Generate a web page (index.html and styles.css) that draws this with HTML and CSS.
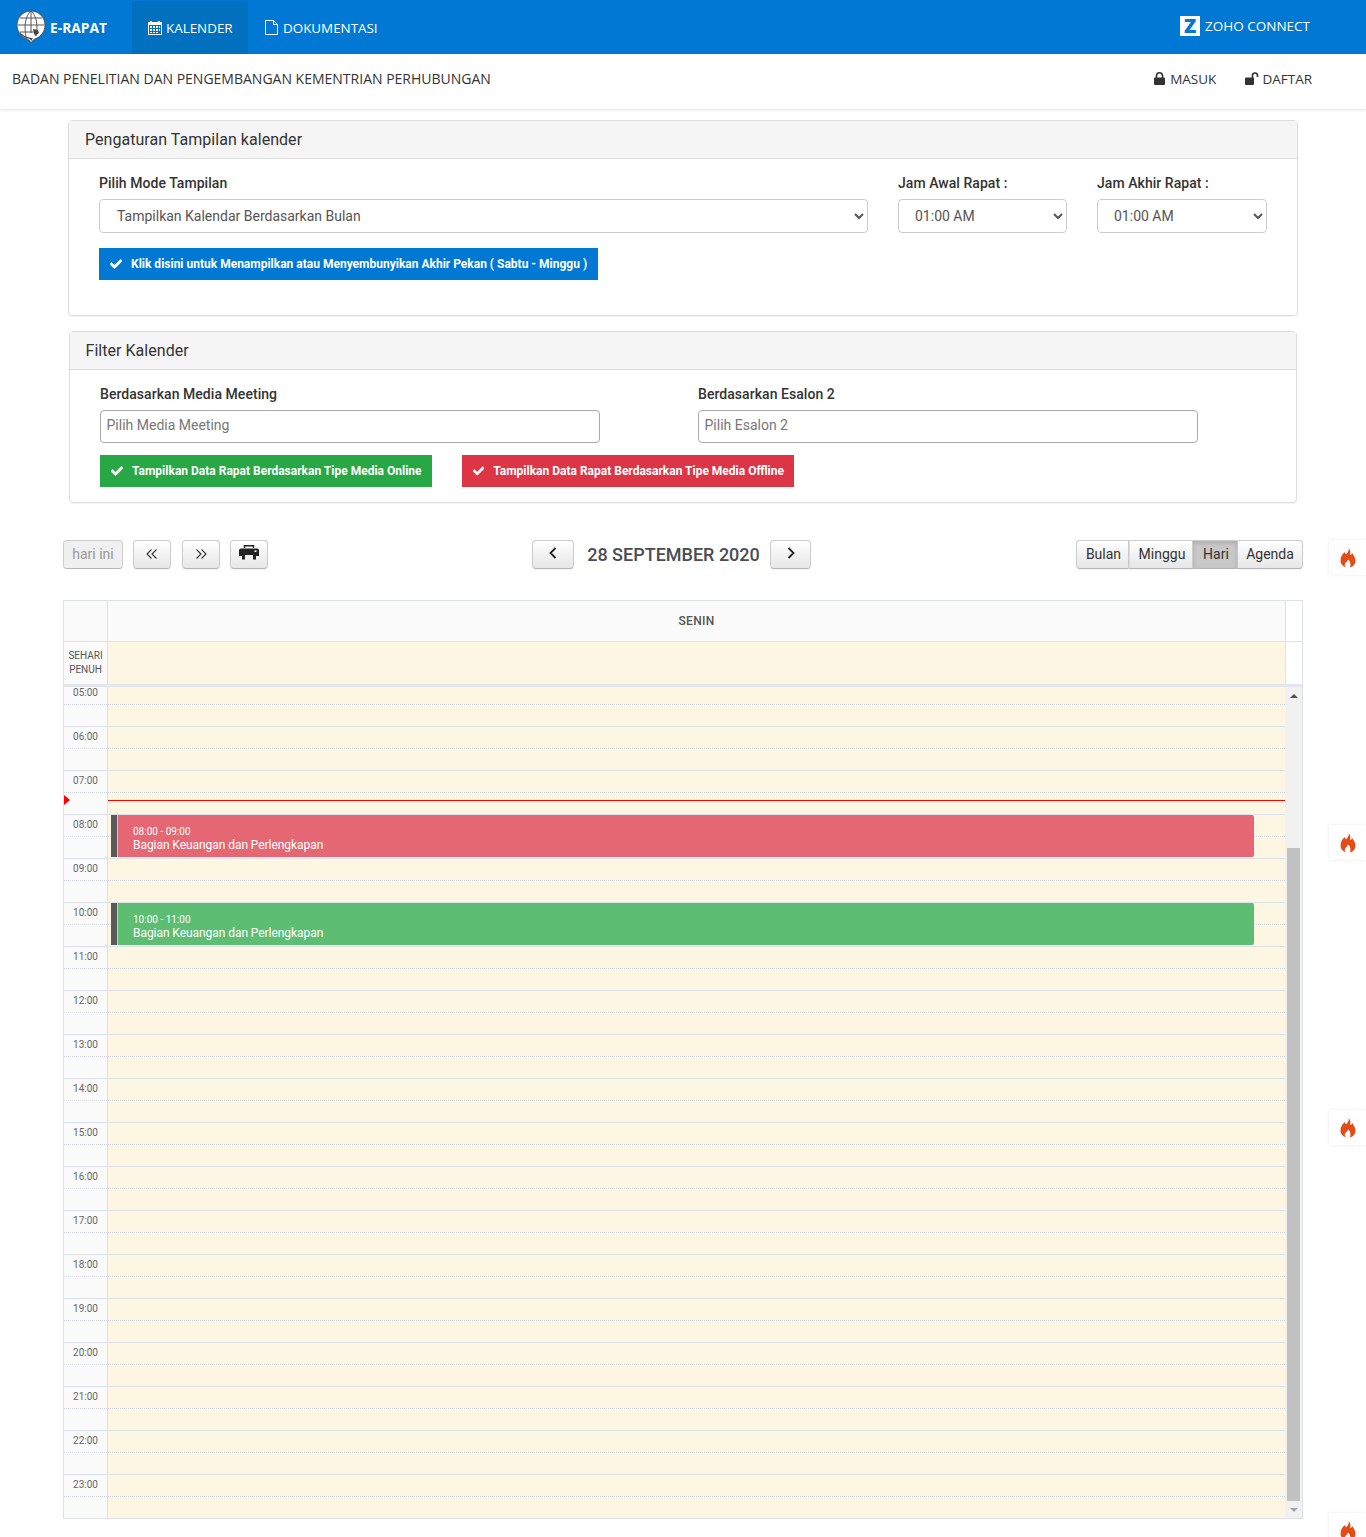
FILE: index.html
```html
<!DOCTYPE html>
<html lang="en">
<head>
    <meta charset="UTF-8">
    <meta name="viewport" content="width=device-width, initial-scale=1.0">
    <title>E-Rapat</title>
    <link rel="stylesheet" href="styles.css">
</head>
<body>
<div class="page">
    <div class="topbar">
        <div class="brand">
            <svg class="brand-logo" viewBox="0 0 30 34" width="30" height="34">
                <path d="M15 1C7 1 1 7.5 1 15c0 6.500 4 11.500 9 13.500 2 .8 4 2 5 4.500 1-2.500 3-3.500 5-4.500 5-2 9-7 9-13.500C29 7.500 23 1 15 1z" fill="#fff" stroke="#555" stroke-width="1"/>
                <path d="M2 15h26M4 8h22M4 22h14M15 1v22M15 1C9 6 8 17 10 27M15 1c6 5 7 15 5 25" fill="none" stroke="#555" stroke-width="1"/>
                <path d="M3 21c2 5 6 7 11 8l1 2 2-3c-5 0-10-2-14-7zM17 19l5 1 1 3-4 3-1-3z" fill="#444"/>
            </svg>
            <span>E-RAPAT</span>
        </div>
        <a class="nav-item active">
            <svg viewBox="0 0 14 14" width="14" height="14"><path d="M0 1h2V0h2v1h6V0h2v1h2v13H0z" fill="#fff"/><path d="M1 4h12v9H1z" fill="#0070bf"/><path d="M2 5h2v2H2zM5 5h2v2H5zM8 5h2v2H8zM11 5h1v2h-1zM2 8h2v2H2zM5 8h2v2H5zM8 8h2v2H8zM11 8h1v2h-1zM2 11h2v1H2zM5 11h2v1H5zM8 11h2v1H8z" fill="#fff"/></svg>
            KALENDER
        </a>
        <a class="nav-item">
            <svg viewBox="0 0 13 15" width="13" height="15"><path d="M.5.500h8l4 4v10H.500zM8.500.500v4h4" fill="none" stroke="#fff"/></svg>
            DOKUMENTASI
        </a>
        <a class="nav-zoho"><span class="zoho-mark">Z</span>ZOHO CONNECT</a>
    </div>

    <div class="subbar">
        <div class="org">BADAN PENELITIAN DAN PENGEMBANGAN KEMENTRIAN PERHUBUNGAN</div>
        <a class="sub-link">
            <svg viewBox="0 0 11 13" width="11" height="13"><path d="M2.500 6V3.800a3 3 0 0 1 6 0V6" fill="none" stroke="#333" stroke-width="1.600"/><path d="M1 5.500h9a1 1 0 0 1 1 1V12a1 1 0 0 1-1 1H1a1 1 0 0 1-1-1V6.500a1 1 0 0 1 1-1z" fill="#333"/></svg>
            MASUK
        </a>
        <a class="sub-link">
            <svg viewBox="0 0 14 13" width="14" height="13"><path d="M7.500 6V3.500a2.500 2.500 0 0 1 5 0V5" fill="none" stroke="#333" stroke-width="1.600"/><path d="M1 5.500h7a1 1 0 0 1 1 1V12a1 1 0 0 1-1 1H1a1 1 0 0 1-1-1V6.500a1 1 0 0 1 1-1z" fill="#333"/></svg>
            DAFTAR
        </a>
    </div>

    <div class="panel panel-mode">
        <div class="panel-head">Pengaturan Tampilan kalender</div>
        <div class="panel-body">
            <div class="mode-grid">
                <div class="field">
                    <label>Pilih Mode Tampilan</label>
                    <select><option>Tampilkan Kalendar Berdasarkan Bulan</option></select>
                </div>
                <div class="field">
                    <label>Jam Awal Rapat :</label>
                    <select><option>01:00 AM</option></select>
                </div>
                <div class="field">
                    <label>Jam Akhir Rapat :</label>
                    <select><option>01:00 AM</option></select>
                </div>
            </div>
            <button class="toggle toggle-blue">
                <svg class="check" viewBox="0 0 512 512" width="12" height="12"><path d="M173.898 439.404l-166.4-166.4c-9.997-9.997-9.997-26.206 0-36.204l36.203-36.204c9.997-9.998 26.207-9.998 36.204 0L192 312.690 432.095 72.596c9.997-9.997 26.207-9.997 36.204 0l36.203 36.204c9.997 9.997 9.997 26.206 0 36.204l-294.400 294.401c-9.998 9.997-26.207 9.997-36.204-.001z"/></svg>
                Klik disini untuk Menampilkan atau Menyembunyikan Akhir Pekan ( Sabtu - Minggu )
            </button>
        </div>
    </div>

    <div class="panel panel-filter">
        <div class="panel-head">Filter Kalender</div>
        <div class="panel-body">
            <div class="filter-grid">
                <div class="field">
                    <label>Berdasarkan Media Meeting</label>
                    <input type="text" placeholder="Pilih Media Meeting">
                </div>
                <div class="field">
                    <label>Berdasarkan Esalon 2</label>
                    <input type="text" placeholder="Pilih Esalon 2">
                </div>
            </div>
            <div class="filter-btns">
                <button class="toggle toggle-green">
                    <svg class="check" viewBox="0 0 512 512" width="12" height="12"><path d="M173.898 439.404l-166.4-166.4c-9.997-9.997-9.997-26.206 0-36.204l36.203-36.204c9.997-9.998 26.207-9.998 36.204 0L192 312.690 432.095 72.596c9.997-9.997 26.207-9.997 36.204 0l36.203 36.204c9.997 9.997 9.997 26.206 0 36.204l-294.400 294.401c-9.998 9.997-26.207 9.997-36.204-.001z"/></svg>
                    Tampilkan Data Rapat Berdasarkan Tipe Media Online
                </button>
                <button class="toggle toggle-red">
                    <svg class="check" viewBox="0 0 512 512" width="12" height="12"><path d="M173.898 439.404l-166.4-166.4c-9.997-9.997-9.997-26.206 0-36.204l36.203-36.204c9.997-9.998 26.207-9.998 36.204 0L192 312.690 432.095 72.596c9.997-9.997 26.207-9.997 36.204 0l36.203 36.204c9.997 9.997 9.997 26.206 0 36.204l-294.400 294.401c-9.998 9.997-26.207 9.997-36.204-.001z"/></svg>
                    Tampilkan Data Rapat Berdasarkan Tipe Media Offline
                </button>
            </div>
        </div>
    </div>

    <div class="toolbar">
        <div class="tb-left">
            <button class="fc-btn today">hari ini</button>
            <button class="fc-btn icon-btn"><svg viewBox="0 0 12 10" width="12" height="10"><path d="M5.500.500L1 5l4.500 4.500M10.500.500L6 5l4.500 4.500" fill="none" stroke="#333" stroke-width="1.100"/></svg></button>
            <button class="fc-btn icon-btn next-gap"><svg viewBox="0 0 12 10" width="12" height="10"><path d="M1.500.500L6 5 1.500 9.500M6.500.500L11 5 6.500 9.500" fill="none" stroke="#333" stroke-width="1.100"/></svg></button>
            <button class="fc-btn icon-btn"><svg viewBox="0 0 20 15" width="20" height="15"><path d="M5.500 3V.8h9V3" fill="none" stroke="#222" stroke-width="1.500"/><path d="M2 3.500h16a2 2 0 0 1 2 2V11h-3v3.500h-3V10H6v4.500H3V11H0V5.500a2 2 0 0 1 2-2z" fill="#222"/><path d="M15.500 5.500h2v1.500h-2z" fill="#fff"/></svg></button>
        </div>
        <div class="tb-center">
            <button class="fc-btn nav-btn"><svg viewBox="0 0 8 12" width="8" height="12"><path d="M6.500 1L1.500 6l5 5" fill="none" stroke="#222" stroke-width="1.800"/></svg></button>
            <h2 class="cal-title">28 SEPTEMBER 2020</h2>
            <button class="fc-btn nav-btn nav-next"><svg viewBox="0 0 8 12" width="8" height="12"><path d="M1.500 1l5 5-5 5" fill="none" stroke="#222" stroke-width="1.800"/></svg></button>
        </div>
        <div class="tb-right">
            <button class="fc-btn seg seg-bulan">Bulan</button><button class="fc-btn seg seg-minggu">Minggu</button><button class="fc-btn seg seg-hari">Hari</button><button class="fc-btn seg seg-agenda">Agenda</button>
        </div>
    </div>

    <div class="cal">
        <div class="cal-head">
            <div class="gutter"></div>
            <div class="day-name">SENIN</div>
            <div class="head-end"></div>
        </div>
        <div class="cal-allday">
            <div class="gutter allday-label">SEHARI<br>PENUH</div>
            <div class="allday-cell"></div>
            <div class="head-end"></div>
        </div>
        <div class="cal-sep"></div>
        <div class="cal-body">
            <div class="cal-grid">
                <div class="hours">
                    <div class="hour"><div class="hour-time"><span>05:00</span></div><div class="hour-day"></div></div>
                    <div class="hour"><div class="hour-time"><span>06:00</span></div><div class="hour-day"></div></div>
                    <div class="hour"><div class="hour-time"><span>07:00</span></div><div class="hour-day"></div></div>
                    <div class="hour"><div class="hour-time"><span>08:00</span></div><div class="hour-day"></div></div>
                    <div class="hour"><div class="hour-time"><span>09:00</span></div><div class="hour-day"></div></div>
                    <div class="hour"><div class="hour-time"><span>10:00</span></div><div class="hour-day"></div></div>
                    <div class="hour"><div class="hour-time"><span>11:00</span></div><div class="hour-day"></div></div>
                    <div class="hour"><div class="hour-time"><span>12:00</span></div><div class="hour-day"></div></div>
                    <div class="hour"><div class="hour-time"><span>13:00</span></div><div class="hour-day"></div></div>
                    <div class="hour"><div class="hour-time"><span>14:00</span></div><div class="hour-day"></div></div>
                    <div class="hour"><div class="hour-time"><span>15:00</span></div><div class="hour-day"></div></div>
                    <div class="hour"><div class="hour-time"><span>16:00</span></div><div class="hour-day"></div></div>
                    <div class="hour"><div class="hour-time"><span>17:00</span></div><div class="hour-day"></div></div>
                    <div class="hour"><div class="hour-time"><span>18:00</span></div><div class="hour-day"></div></div>
                    <div class="hour"><div class="hour-time"><span>19:00</span></div><div class="hour-day"></div></div>
                    <div class="hour"><div class="hour-time"><span>20:00</span></div><div class="hour-day"></div></div>
                    <div class="hour"><div class="hour-time"><span>21:00</span></div><div class="hour-day"></div></div>
                    <div class="hour"><div class="hour-time"><span>22:00</span></div><div class="hour-day"></div></div>
                    <div class="hour"><div class="hour-time"><span>23:00</span></div><div class="hour-day"></div></div>
                </div>
                <div class="now-arrow"></div>
                <div class="now-line"></div>
                <div class="event event-red">
                    <div class="event-time">08:00 - 09:00</div>
                    <div class="event-title">Bagian Keuangan dan Perlengkapan</div>
                </div>
                <div class="event event-green">
                    <div class="event-time">10:00 - 11:00</div>
                    <div class="event-title">Bagian Keuangan dan Perlengkapan</div>
                </div>
            </div>
            <div class="scrollbar">
                <div class="sb-arrow"><span class="arrow-up"></span></div>
                <div class="sb-track"></div>
                <div class="sb-thumb"></div>
                <div class="sb-arrow"><span class="arrow-down"></span></div>
            </div>
        </div>
    </div>

    <div class="flame-tab tab-1"><svg viewBox="0 0 16 20" width="16" height="20"><path d="M8.500 0c1 3-1 4.500-2.300 6.300C5.500 5.800 5 5 5 4 2.500 6 .5 8.500.5 12.500c0 3.500 2.500 6 6 7-1.700-1-2.300-2.700-1.300-4.300.8-1.200 2.300-1.700 2.800-3.700 1.500 1.200 3.300 3.500 2 8 3.500-1 5.500-3.500 5.500-7 0-3.500-2.500-5.500-3.200-7.500-.6 1.500-1.300 2-2.300 2 1-3 .3-5-1.500-7z" fill="#e34c17"/></svg></div>
    <div class="flame-tab tab-2"><svg viewBox="0 0 16 20" width="16" height="20"><path d="M8.500 0c1 3-1 4.500-2.300 6.300C5.500 5.800 5 5 5 4 2.500 6 .5 8.500.5 12.500c0 3.500 2.500 6 6 7-1.700-1-2.300-2.700-1.300-4.300.8-1.200 2.300-1.700 2.800-3.700 1.500 1.200 3.300 3.500 2 8 3.500-1 5.500-3.500 5.500-7 0-3.500-2.500-5.500-3.200-7.500-.6 1.500-1.300 2-2.300 2 1-3 .3-5-1.500-7z" fill="#e34c17"/></svg></div>
    <div class="flame-tab tab-3"><svg viewBox="0 0 16 20" width="16" height="20"><path d="M8.500 0c1 3-1 4.500-2.300 6.300C5.500 5.800 5 5 5 4 2.500 6 .5 8.500.5 12.500c0 3.500 2.500 6 6 7-1.700-1-2.300-2.700-1.300-4.300.8-1.200 2.300-1.700 2.800-3.700 1.500 1.200 3.300 3.500 2 8 3.500-1 5.500-3.500 5.500-7 0-3.500-2.500-5.500-3.200-7.500-.6 1.500-1.300 2-2.300 2 1-3 .3-5-1.500-7z" fill="#e34c17"/></svg></div>
    <div class="flame-tab tab-4"><svg viewBox="0 0 16 20" width="16" height="20"><path d="M8.500 0c1 3-1 4.500-2.300 6.300C5.500 5.800 5 5 5 4 2.500 6 .5 8.500.5 12.500c0 3.500 2.500 6 6 7-1.700-1-2.300-2.700-1.300-4.300.8-1.200 2.300-1.700 2.800-3.700 1.500 1.200 3.300 3.500 2 8 3.500-1 5.500-3.500 5.500-7 0-3.500-2.500-5.500-3.200-7.500-.6 1.500-1.300 2-2.300 2 1-3 .3-5-1.500-7z" fill="#e34c17"/></svg></div>
</div>
</body>
</html>
```

FILE: styles.css
```css
* {
    margin: 0;
    padding: 0;
    box-sizing: border-box;
}
body {
    font-family: Roboto, "Liberation Sans", sans-serif;
    font-size: 14px;
    color: #333;
    background: #fff;
}
.page {
    position: relative;
    height: 1537px;
    overflow: hidden;
}

/* top bar */
.topbar {
    display: flex;
    align-items: center;
    height: 54px;
    background: #0078d4;
    color: #fff;
    font-family: "Open Sans", "Noto Sans", sans-serif;
}
.brand {
    display: flex;
    align-items: center;
    gap: 4px;
    width: 132px;
    padding-left: 16px;
    font-size: 13.800px;
    font-weight: 700;
}
.nav-item {
    display: flex;
    align-items: center;
    gap: 4px;
    width: 116px;
    height: 53px;
    margin-top: 1px;
    padding-left: 16px;
    font-size: 13.400px;
}
.nav-item + .nav-item {
    width: auto;
    padding-left: 17px;
    gap: 5px;
}
.nav-item.active {
    background: #0070bf;
}
.nav-zoho {
    display: flex;
    align-items: center;
    gap: 5px;
    margin-left: auto;
    margin-right: 56px;
    margin-bottom: 2px;
    font-size: 13.500px;
}
.zoho-mark {
    width: 20px;
    height: 20px;
    background: #fff;
    color: #0078d4;
    font-size: 20px;
    font-weight: 800;
    line-height: 20px;
    text-align: center;
}

/* second bar */
.subbar {
    display: flex;
    align-items: center;
    gap: 29px;
    height: 55px;
    padding: 0 54px 6px 12px;
    font-family: "Open Sans", "Noto Sans", sans-serif;
    font-size: 14px;
    color: #333;
    box-shadow: 0 1px 3px rgba(0,0,0,.12);
}
.org {
    margin-right: auto;
}
.sub-link {
    display: flex;
    align-items: center;
    gap: 5px;
    font-size: 13.500px;
}
.sub-link + .sub-link {
    gap: 3px;
}

/* panels */
.panel {
    border: 1px solid #ddd;
    border-radius: 4px;
    box-shadow: 0 1px 1px rgba(0,0,0,.05);
}
.panel-mode {
    height: 196px;
    margin: 11px 68px 0;
}
.panel-filter {
    height: 172px;
    margin: 15px 69px 0;
}
.panel-head {
    height: 38px;
    padding: 0 16px;
    background: #f5f5f5;
    border-bottom: 1px solid #ddd;
    font-size: 16px;
    line-height: 37px;
    letter-spacing: .04px;
}
.panel-filter .panel-head {
    padding-left: 15.500px;
}
.panel-body {
    padding: 16px 30px 0;
}
.mode-grid {
    display: grid;
    grid-template-columns: 1fr 169px 170px;
    gap: 30px;
}
.filter-grid {
    display: grid;
    grid-template-columns: 500px 500px;
    gap: 98px;
}
.field label {
    display: block;
    height: 24px;
    font-weight: 500;
    line-height: 17px;
    letter-spacing: .05px;
}
.field select {
    display: block;
    width: 100%;
    height: 34px;
    padding: 0 12px;
    border: 1px solid #ccc;
    border-radius: 4px;
    background: #fff;
    font-family: inherit;
    font-size: 14px;
    color: #555;
}
.mode-grid .field:first-child select {
    padding-left: 13px;
}
.field input {
    display: block;
    width: 100%;
    height: 33px;
    padding: 0 6px 3px 5.500px;
    border: 1px solid #aaa;
    border-radius: 4px;
    font-family: inherit;
    font-size: 14px;
}
.field input::placeholder {
    color: #777;
}
.toggle {
    display: inline-flex;
    align-items: center;
    gap: 9px;
    height: 32px;
    padding: 0 10px 0 11px;
    border: 0;
    color: #fff;
    font-family: inherit;
    font-size: 12px;
    font-weight: 700;
    white-space: nowrap;
}
.check {
    fill: #fff;
    stroke: #fff;
    stroke-width: 30;
}
.toggle-blue {
    width: 499px;
    margin-top: 15px;
    background: #0078d4;
}
.filter-btns {
    display: flex;
    gap: 30px;
    margin-top: 12px;
}
.toggle-green {
    width: 332px;
    background: #28a745;
}
.toggle-red {
    width: 332px;
    background: #dc3545;
}

/* calendar toolbar */
.toolbar {
    display: flex;
    justify-content: space-between;
    align-items: center;
    height: 29px;
    margin: 37px 63px 0;
}
.tb-left, .tb-center, .tb-right {
    display: flex;
    align-items: center;
}
.tb-left {
    gap: 10px;
}
.fc-btn {
    height: 29px;
    padding-bottom: 2px;
    border: 1px solid #ccc;
    border-bottom-color: #b5b5b5;
    border-radius: 4px;
    background: linear-gradient(#fff, #e6e6e6);
    color: #333;
    font-family: inherit;
    font-size: 14px;
    box-shadow: 0 1px 2px rgba(0,0,0,.05);
}
.today {
    width: 60px;
    background: #f0f0f0;
    color: #999;
    box-shadow: none;
}
.icon-btn {
    width: 38px;
}
.next-gap {
    margin-left: 1px;
}
.nav-btn {
    width: 42px;
}
.nav-next {
    width: 41px;
    margin-right: 2px;
    padding-left: 2px;
}
.cal-title {
    width: 196px;
    padding-left: 4px;
    color: #484d55;
    font-size: 18px;
    font-weight: 500;
    text-align: center;
}
.seg {
    padding-left: 2px;
    border-radius: 0;
    border-left-width: 0;
}
.seg-bulan {
    width: 53px;
    border-left-width: 1px;
    border-radius: 4px 0 0 4px;
}
.seg-minggu {
    width: 64px;
    border-left: 1px solid #ddd;
}
.seg-hari {
    width: 45px;
    background: #c8c8c8;
    box-shadow: inset 0 2px 4px rgba(0,0,0,.15);
}
.seg-agenda {
    width: 65px;
    padding-left: 0;
    border-radius: 0 4px 4px 0;
}

/* calendar */
.cal {
    height: 919px;
    margin: 31px 63px 0;
    border: 1px solid #dde1ea;
}
.cal-head {
    display: flex;
    height: 41px;
    border-bottom: 1px solid #dde1ea;
}
.cal-allday {
    display: flex;
    height: 42px;
}
.gutter {
    width: 44px;
    background: #fafafa;
    border-right: 1px solid #dde1ea;
}
.day-name {
    flex: 1;
    background: #fafafa;
    color: #555;
    font-size: 12px;
    font-weight: 500;
    letter-spacing: .3px;
    line-height: 40px;
    text-align: center;
}
.head-end {
    width: 17px;
    border-left: 1px solid #dde1ea;
}
.allday-label {
    padding-top: 7px;
    color: #555;
    font-size: 10px;
    line-height: 14px;
    text-align: center;
}
.allday-cell {
    flex: 1;
    background: #fdf6e3;
}
.cal-sep {
    height: 3px;
    background: #e3e6ee;
}
.cal-body {
    display: flex;
    height: 831px;
    overflow: hidden;
}
.cal-grid {
    position: relative;
    flex: 1;
}
.hours {
    margin-top: -4px;
}
.hour {
    display: flex;
    height: 44px;
    border-bottom: 1px solid #dde1ea;
}
.hour-time {
    width: 44px;
    background: #fafafa;
    border-right: 1px solid #dde1ea;
}
.hour-time span {
    display: block;
    height: 22px;
    padding-top: 3px;
    border-bottom: 1px dotted #d5d9e5;
    color: #666;
    font-size: 10px;
    line-height: 14px;
    text-align: center;
}
.hour-day {
    flex: 1;
    background: #fdf6e3;
}
.hour-day::before {
    content: "";
    display: block;
    height: 21px;
    border-bottom: 1px dotted #d5d9e5;
}
.now-line {
    position: absolute;
    top: 113px;
    left: 44px;
    right: 0;
    border-top: 1px solid #f00;
}
.now-arrow {
    position: absolute;
    top: 108px;
    left: 0;
    border-left: 6px solid #f00;
    border-top: 5px solid transparent;
    border-bottom: 5px solid transparent;
}
.event {
    position: absolute;
    left: 47px;
    width: 1143px;
    height: 42px;
    padding: 11px 0 0 16px;
    border-left: 6px solid #5a5a5a;
    border-radius: 0 2px 2px 0;
    color: #fff;
    box-shadow: inset 1px 0 0 #ccc;
}
.event-red {
    top: 128px;
    background: #e56773;
}
.event-green {
    top: 216px;
    background: #5cbd73;
}
.event-time {
    font-size: 10px;
    line-height: 12px;
}
.event-title {
    font-size: 12px;
    line-height: 14px;
    letter-spacing: -.06px;
}
.scrollbar {
    display: flex;
    flex-direction: column;
    align-items: center;
    width: 17px;
    background: #f1f1f1;
}
.sb-arrow {
    display: flex;
    justify-content: center;
    align-items: center;
    height: 17px;
    flex: none;
}
.arrow-up {
    border: 4px solid transparent;
    border-top: 0;
    border-bottom: 4px solid #505050;
}
.arrow-down {
    border: 4px solid transparent;
    border-bottom: 0;
    border-top: 4px solid #a3a3a3;
}
.sb-track {
    height: 144px;
    flex: none;
}
.sb-thumb {
    flex: 1;
    width: 13px;
    background: #c1c1c1;
}

/* side tabs */
.flame-tab {
    position: absolute;
    left: 1329px;
    width: 37px;
    height: 35px;
    padding: 8px 0 0 11px;
    background: #fff;
    box-shadow: 0 0 3px rgba(0,0,0,.1);
}
.tab-1 {
    top: 540px;
}
.tab-2 {
    top: 825px;
}
.tab-3 {
    top: 1110px;
}
.tab-4 {
    top: 1513px;
}
```
